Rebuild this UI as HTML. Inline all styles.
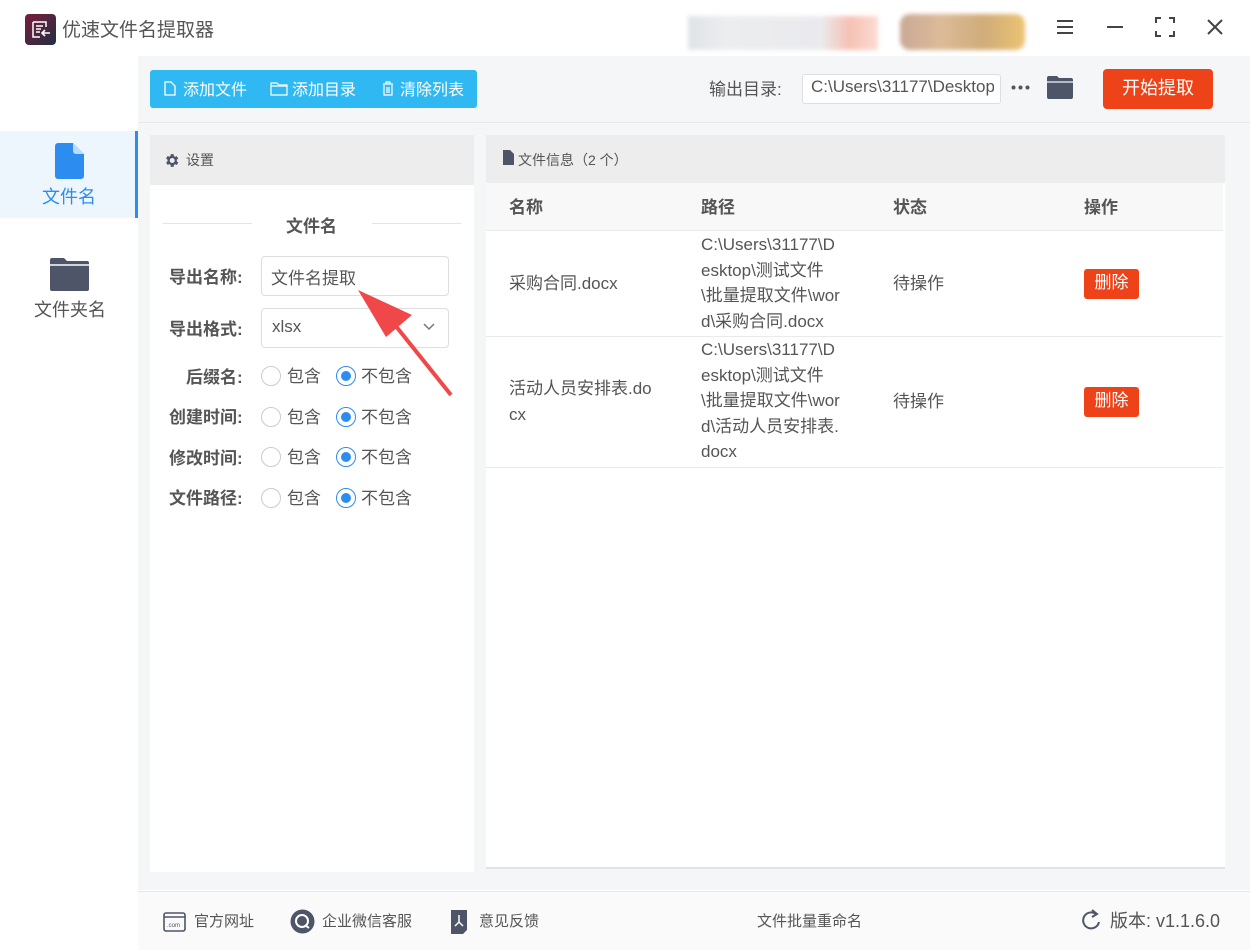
<!DOCTYPE html>
<html><head><meta charset="utf-8"><style>
*{margin:0;padding:0;box-sizing:border-box}
body{width:1250px;height:950px;position:relative;overflow:hidden;background:#fff;font-family:"Liberation Sans","Noto Sans CJK SC",sans-serif;color:#555}
.a{position:absolute}
.t{white-space:nowrap}
.up{margin-top:-3px}
.lbl{font-size:17px;font-weight:bold;color:#555;margin-top:-3px}
.radio{width:20px;height:20px;border-radius:50%;border:1px solid #ccc;background:#fff}
.radio.on{border:1px solid #2d8cf0}
.radio.on::after{content:"";position:absolute;left:4px;top:4px;width:10px;height:10px;border-radius:50%;background:#2d8cf0}
.opt{font-size:17px;color:#555;margin-top:-3px}
.cell{font-size:17px;color:#555;line-height:25.5px}
.del{background:#ee4318;color:#fff;font-size:17px;border-radius:3px;width:55px;height:30px;line-height:28px;text-align:center}
.ft{font-size:15px;color:#555;margin-top:-2px}
</style></head><body>
<!-- title bar -->
<div class="a" style="left:25px;top:14px;width:31px;height:31px;border-radius:4px;background:linear-gradient(135deg,#7a1d3a,#1f2f45)">
<svg width="31" height="31" viewBox="0 0 31 31"><path d="M8 8h13v5M8 8v15h7M11 12h7M11 15h5M11 18h4" stroke="#fff" stroke-width="1.5" fill="none"/><path d="M25 19h-7M20 16l-3 3 3 3" stroke="#fff" stroke-width="1.6" fill="none"/></svg></div>
<div class="a t" style="left:62px;top:15px;font-size:19px;color:#555">优速文件名提取器</div>
<div class="a" style="left:688px;top:16px;width:190px;height:34px;background:linear-gradient(90deg,#d8dde0 0%,#e8e9ec 20%,#e6e6ea 70%,#f4b2a2 85%,#fbd3c8 100%);filter:blur(2px);opacity:.8"></div>
<div class="a" style="left:900px;top:14px;width:125px;height:36px;border-radius:10px;background:linear-gradient(90deg,#c19a85,#d6b086,#c89e63,#e8b95a);filter:blur(2px);opacity:.85"></div>
<svg class="a" style="left:1055px;top:17px" width="20" height="20"><path d="M2 4h16M2 10h16M2 16h16" stroke="#444" stroke-width="2"/></svg>
<svg class="a" style="left:1105px;top:17px" width="20" height="20"><path d="M2 10h16" stroke="#444" stroke-width="2"/></svg>
<svg class="a" style="left:1155px;top:17px" width="20" height="20"><path d="M1 6V1h5M14 1h5v5M19 14v5h-5M6 19H1v-5" stroke="#444" stroke-width="2" fill="none"/></svg>
<svg class="a" style="left:1205px;top:17px" width="20" height="20"><path d="M3 3l14 14M17 3L3 17" stroke="#444" stroke-width="2"/></svg>

<!-- sidebar -->
<div class="a" style="left:0;top:131px;width:135px;height:87px;background:#eef6fd"></div>
<div class="a" style="left:135px;top:131px;width:3px;height:87px;background:#2d8cf0"></div>
<svg class="a" style="left:55px;top:143px" width="29" height="36"><path d="M3 0h15l11 11v22a3 3 0 0 1-3 3H3a3 3 0 0 1-3-3V3a3 3 0 0 1 3-3z" fill="#2d8cf0"/><path d="M18 0v8a3 3 0 0 0 3 3h8z" fill="#bcdcfb"/></svg>
<div class="a t" style="left:42px;top:183px;font-size:18px;color:#2d8cf0">文件名</div>
<svg class="a" style="left:50px;top:258px" width="39" height="33"><path d="M2 0h12l3 3h20a2 2 0 0 1 2 2v26a2 2 0 0 1-2 2H2a2 2 0 0 1-2-2V2a2 2 0 0 1 2-2z" fill="#4f5568"/><path d="M0 7h39" stroke="#fff" stroke-width="1.5"/></svg>
<div class="a t" style="left:34px;top:296px;font-size:18px;color:#555">文件夹名</div>

<!-- main area -->
<div class="a" style="left:138px;top:56px;width:1112px;height:834px;background:#f5f6f8"></div>
<div class="a" style="left:138px;top:122px;width:1112px;height:1px;background:#e8e8e8"></div>
<div class="a" style="left:150px;top:70px;width:327px;height:38px;background:#30b8f3;border-radius:3px"></div>
<svg class="a" style="left:164px;top:81px" width="12" height="15"><path d="M1 1h6l4 4v9H1z" stroke="#fff" stroke-width="1.3" fill="none"/></svg>
<div class="a t" style="left:183px;top:76px;font-size:16px;color:#fff">添加文件</div>
<svg class="a" style="left:270px;top:81px" width="18" height="15"><path d="M1 2h6l2 2h8v10H1z M1 5h16" stroke="#fff" stroke-width="1.2" fill="none"/></svg>
<div class="a t" style="left:292px;top:76px;font-size:16px;color:#fff">添加目录</div>
<svg class="a" style="left:381px;top:81px" width="14" height="15"><path d="M2 3h10M5 3V1h4v2M3 4v10h8V4M6 6v6M8 6v6" stroke="#fff" stroke-width="1.2" fill="none"/></svg>
<div class="a t" style="left:400px;top:76px;font-size:16px;color:#fff">清除列表</div>

<div class="a t" style="left:709px;top:75px;font-size:17px;color:#555">输出目录:</div>
<div class="a" style="left:802px;top:74px;width:199px;height:30px;background:#fff;border:1px solid #dcdee2;border-radius:3px"></div>
<div class="a t" style="left:811px;top:77px;font-size:17px;color:#555;width:183px;overflow:hidden">C:\Users\31177\Desktop</div>
<svg class="a" style="left:1011px;top:85px" width="20" height="5"><circle cx="2.5" cy="2.5" r="2" fill="#555"/><circle cx="9.5" cy="2.5" r="2" fill="#555"/><circle cx="16.5" cy="2.5" r="2" fill="#555"/></svg>
<svg class="a" style="left:1047px;top:76px" width="26" height="23"><path d="M2 0h8l2 2h12a2 2 0 0 1 2 2v17a2 2 0 0 1-2 2H2a2 2 0 0 1-2-2V2a2 2 0 0 1 2-2z" fill="#4f5568"/><path d="M0 6h26" stroke="#f5f6f8" stroke-width="1.2"/></svg>
<div class="a" style="left:1103px;top:69px;width:110px;height:40px;background:#ee4318;border-radius:4px;color:#fff;font-size:18px;line-height:38px;text-align:center">开始提取</div>

<!-- settings panel -->
<div class="a" style="left:150px;top:135px;width:324px;height:737px;background:#fff"></div>
<div class="a" style="left:150px;top:135px;width:324px;height:50px;background:#ededed"></div>
<svg class="a" style="left:163px;top:152px" width="17" height="17" viewBox="0 0 24 24"><path fill="#4f5568" d="M19.4 13a7.5 7.5 0 0 0 0-2l2.1-1.6-2-3.5-2.5 1a7 7 0 0 0-1.7-1L15 3h-4l-.4 2.7a7 7 0 0 0-1.7 1l-2.5-1-2 3.5L6.5 11a7.5 7.5 0 0 0 0 2l-2.1 1.6 2 3.5 2.5-1a7 7 0 0 0 1.7 1L11 21h4l.4-2.7a7 7 0 0 0 1.7-1l2.5 1 2-3.5zM13 15.5a3.5 3.5 0 1 1 0-7 3.5 3.5 0 0 1 0 7z"/></svg>
<div class="a t" style="left:186px;top:150px;font-size:14px;color:#555">设置</div>
<div class="a" style="left:163px;top:223px;width:89px;height:1px;background:#e5e5e5"></div>
<div class="a" style="left:372px;top:223px;width:89px;height:1px;background:#e5e5e5"></div>
<div class="a t" style="left:286px;top:212px;font-size:17px;font-weight:bold;color:#555">文件名</div>
<div class="a t lbl" style="left:169px;top:266px">导出名称:</div>
<div class="a" style="left:261px;top:256px;width:188px;height:40px;border:1px solid #dcdee2;border-radius:4px;background:#fff"></div>
<div class="a t" style="left:271px;top:264px;font-size:17px;color:#555">文件名提取</div>
<div class="a t lbl" style="left:169px;top:318px">导出格式:</div>
<div class="a" style="left:261px;top:308px;width:188px;height:40px;border:1px solid #dcdee2;border-radius:4px;background:#fff"></div>
<div class="a t" style="left:272px;top:317px;font-size:17px;color:#555">xlsx</div>
<svg class="a" style="left:422px;top:322px" width="14" height="10"><path d="M2 2l5 5 5-5" stroke="#777" stroke-width="1.5" fill="none"/></svg>

<div class="a t lbl" style="left:186px;top:366px">后缀名:</div>
<div class="a t lbl" style="left:169px;top:406px">创建时间:</div>
<div class="a t lbl" style="left:169px;top:447px">修改时间:</div>
<div class="a t lbl" style="left:169px;top:487px">文件路径:</div>

<div class="a radio" style="left:261px;top:366px"></div><div class="a t opt" style="left:287px;top:365px">包含</div>
<div class="a radio on" style="left:336px;top:366px"></div><div class="a t opt" style="left:361px;top:365px">不包含</div>
<div class="a radio" style="left:261px;top:407px"></div><div class="a t opt" style="left:287px;top:406px">包含</div>
<div class="a radio on" style="left:336px;top:407px"></div><div class="a t opt" style="left:361px;top:406px">不包含</div>
<div class="a radio" style="left:261px;top:447px"></div><div class="a t opt" style="left:287px;top:446px">包含</div>
<div class="a radio on" style="left:336px;top:447px"></div><div class="a t opt" style="left:361px;top:446px">不包含</div>
<div class="a radio" style="left:261px;top:488px"></div><div class="a t opt" style="left:287px;top:487px">包含</div>
<div class="a radio on" style="left:336px;top:488px"></div><div class="a t opt" style="left:361px;top:487px">不包含</div>

<!-- arrow -->
<svg class="a" style="left:350px;top:285px" width="110" height="115"><path d="M101 110L45 40" stroke="#f04848" stroke-width="4"/><path d="M8 5L62 30L36 52z" fill="#f04848"/></svg>

<!-- file panel -->
<div class="a" style="left:486px;top:135px;width:739px;height:733px;background:#fff"></div>
<div class="a" style="left:486px;top:135px;width:739px;height:48px;background:#ededed"></div>
<svg class="a" style="left:503px;top:150px" width="11" height="15"><path d="M0 0h7l4 4v11H0z" fill="#4f5568"/></svg>
<div class="a t" style="left:518px;top:150px;font-size:14px;color:#555">文件信息（2 个）</div>
<div class="a" style="left:486px;top:183px;width:737px;height:48px;background:#f8f8f9;border-bottom:1px solid #e8eaec"></div>
<div class="a t" style="left:509px;top:196px;font-size:17px;font-weight:bold;color:#555;margin-top:-3px">名称</div>
<div class="a t" style="left:701px;top:196px;font-size:17px;font-weight:bold;color:#555;margin-top:-3px">路径</div>
<div class="a t" style="left:893px;top:196px;font-size:17px;font-weight:bold;color:#555;margin-top:-3px">状态</div>
<div class="a t" style="left:1084px;top:196px;font-size:17px;font-weight:bold;color:#555;margin-top:-3px">操作</div>

<div class="a cell t" style="left:509px;top:271px">采购合同.docx</div>
<div class="a cell t" style="left:701px;top:232px">C:\Users\31177\D<br>esktop\测试文件<br>\批量提取文件\wor<br>d\采购合同.docx</div>
<div class="a cell t" style="left:893px;top:271px">待操作</div>
<div class="a del" style="left:1084px;top:269px">删除</div>
<div class="a" style="left:486px;top:336px;width:737px;height:1px;background:#e8eaec"></div>

<div class="a cell t" style="left:509px;top:376px">活动人员安排表.do<br>cx</div>
<div class="a cell t" style="left:701px;top:337px">C:\Users\31177\D<br>esktop\测试文件<br>\批量提取文件\wor<br>d\活动人员安排表.<br>docx</div>
<div class="a cell t" style="left:893px;top:389px">待操作</div>
<div class="a del" style="left:1084px;top:387px">删除</div>
<div class="a" style="left:486px;top:467px;width:737px;height:1px;background:#e8eaec"></div>
<div class="a" style="left:486px;top:867px;width:739px;height:2px;background:#e3e3e3"></div>

<!-- footer -->
<div class="a" style="left:138px;top:891px;width:1112px;height:59px;background:#fafafa;border-top:1px solid #e8e8e8"></div>
<svg class="a" style="left:163px;top:912px" width="23" height="20"><rect x="1" y="1" width="21" height="18" rx="2" stroke="#4f5568" stroke-width="1.6" fill="none"/><path d="M1 5h21" stroke="#4f5568" stroke-width="1.6"/><text x="4" y="15" font-size="6" fill="#4f5568" font-family="Liberation Sans">.com</text></svg>
<div class="a t ft" style="left:194px;top:912px">官方网址</div>
<svg class="a" style="left:290px;top:909px" width="25" height="25"><circle cx="12.5" cy="12.5" r="12" fill="#4f5568"/><circle cx="12" cy="12" r="6" stroke="#fff" stroke-width="2" fill="none"/><path d="M15 16l4 3" stroke="#fff" stroke-width="2"/></svg>
<div class="a t ft" style="left:322px;top:912px">企业微信客服</div>
<svg class="a" style="left:451px;top:910px" width="17" height="24"><path d="M0 0h16v20l-4 4H0z" fill="#4f5568"/><path d="M8 5v7M4 16l4-4 4 4" stroke="#fff" stroke-width="1.5" fill="none"/></svg>
<div class="a t ft" style="left:479px;top:912px">意见反馈</div>
<div class="a t ft" style="left:757px;top:912px">文件批量重命名</div>
<svg class="a" style="left:1082px;top:909px" width="20" height="24"><path d="M14 5A8 8 0 1 0 17 13" stroke="#4f5568" stroke-width="2" fill="none"/><path d="M10 1l5 4-5 3" stroke="#4f5568" stroke-width="2" fill="none"/></svg>
<div class="a t" style="left:1110px;top:907px;font-size:18px;color:#555">版本: v1.1.6.0</div>
</body></html>
